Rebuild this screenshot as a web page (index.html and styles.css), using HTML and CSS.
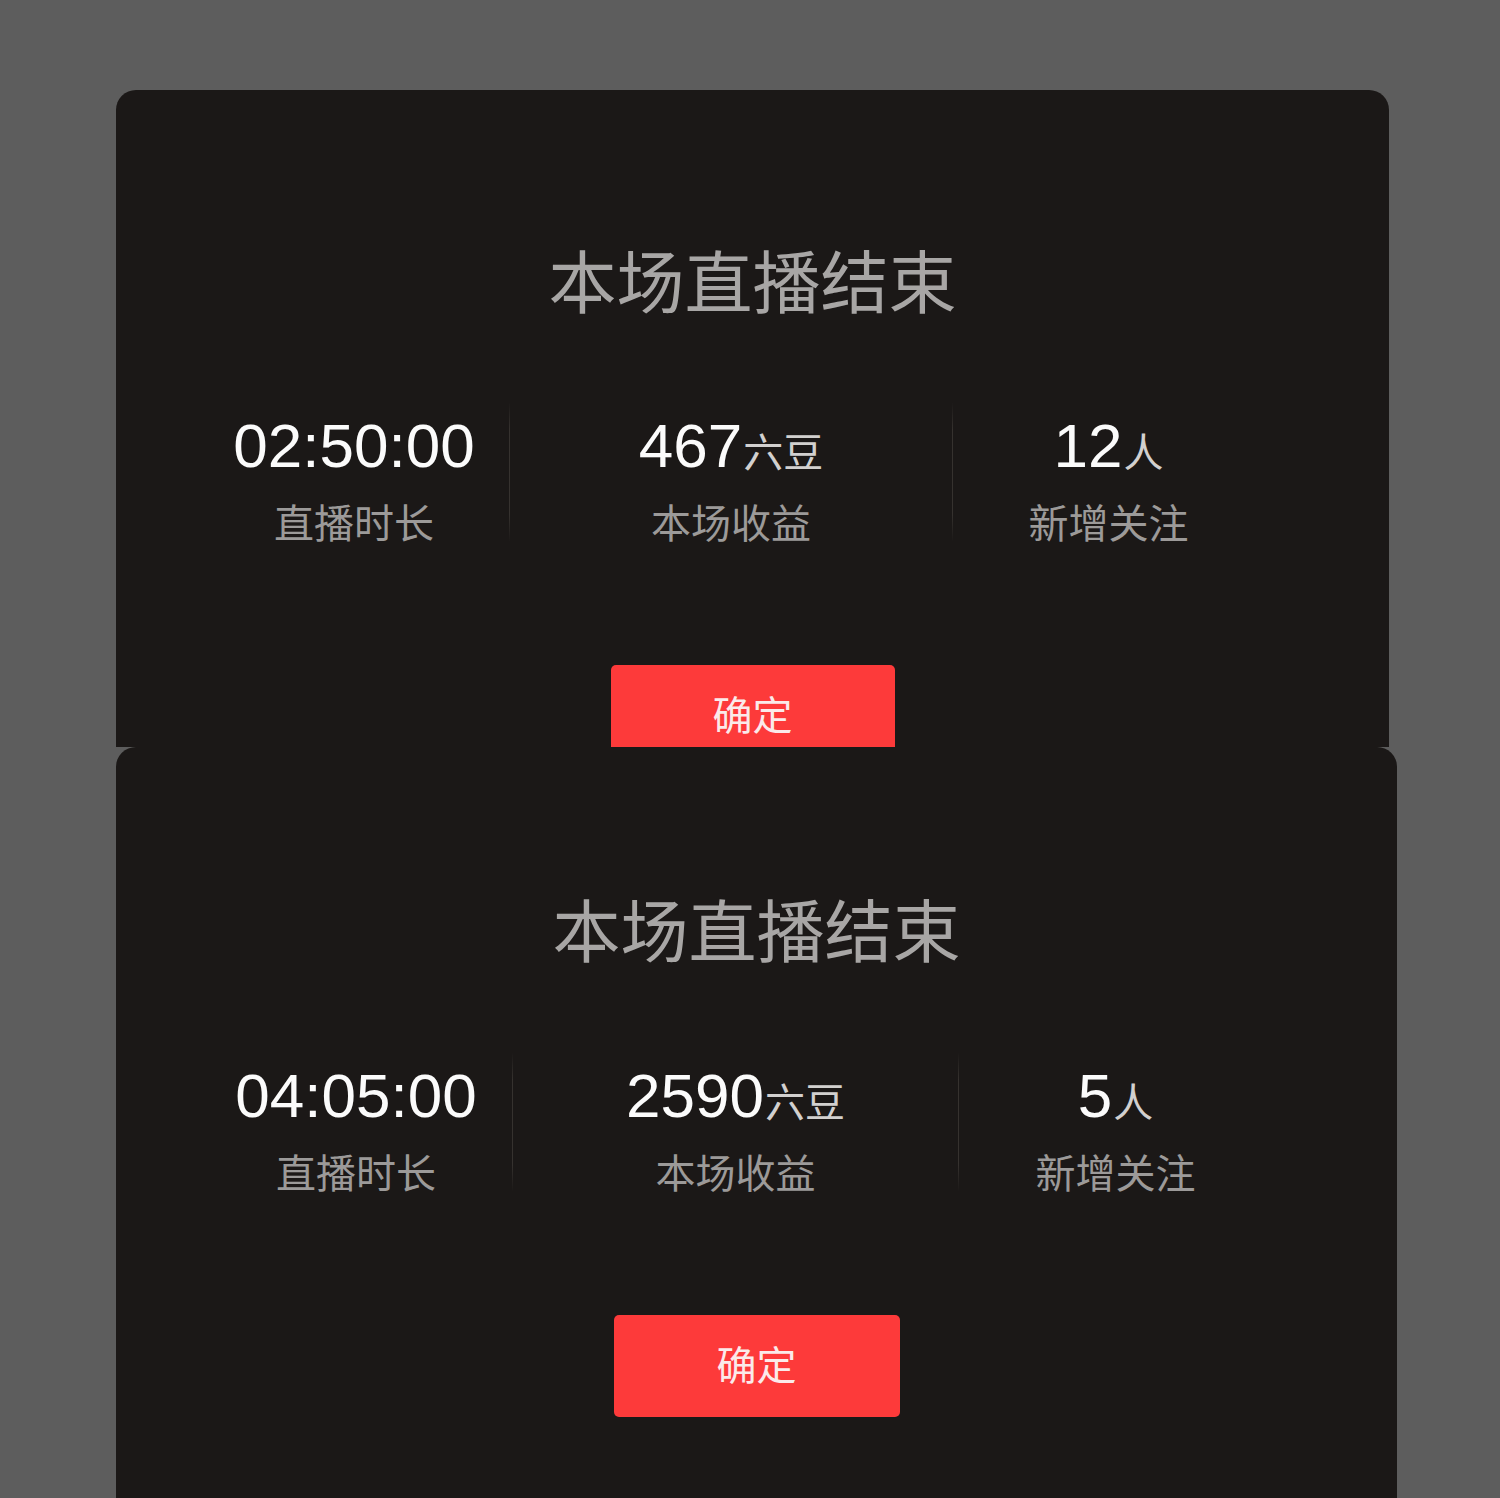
FILE: index.html
```html
<!DOCTYPE html>
<html lang="zh-CN">
<head>
<meta charset="utf-8">
<title>本场直播结束</title>
<link rel="stylesheet" href="styles.css">
</head>
<body>
<div class="page">
  <section class="card card--first">
    <h1 class="title">本场直播结束</h1>
    <div class="stats">
      <div class="stat">
        <div class="value">02:50:00</div>
        <div class="label">直播时长</div>
      </div>
      <div class="stat">
        <div class="value">467<span class="unit">六豆</span></div>
        <div class="label">本场收益</div>
      </div>
      <div class="stat">
        <div class="value">12<span class="unit">人</span></div>
        <div class="label">新增关注</div>
      </div>
    </div>
    <button class="btn">确定</button>
  </section>
  <section class="card card--second">
    <h1 class="title">本场直播结束</h1>
    <div class="stats">
      <div class="stat">
        <div class="value">04:05:00</div>
        <div class="label">直播时长</div>
      </div>
      <div class="stat">
        <div class="value">2590<span class="unit">六豆</span></div>
        <div class="label">本场收益</div>
      </div>
      <div class="stat">
        <div class="value">5<span class="unit">人</span></div>
        <div class="label">新增关注</div>
      </div>
    </div>
    <button class="btn">确定</button>
  </section>
</div>
</body>
</html>
```
FILE: styles.css
```css
html, body {
  margin: 0;
  padding: 0;
  background: #5d5d5d;
}
body {
  font-family: "Noto Sans CJK SC", "Noto Sans", sans-serif;
  height: 1498px;
  overflow: hidden;
}
.page {
  padding-top: 90px;
  padding-left: 116px;
}
.card {
  box-sizing: border-box;
  background: #1b1817;
  border-radius: 20px 20px 0 0;
  overflow: hidden;
}
.card--first {
  width: 1273px;
  height: 657px;
  padding-top: 155px;
}
.card--second {
  width: 1281px;
  height: 900px;
  padding-top: 147px;
}
.title {
  margin: 0;
  font-size: 68px;
  line-height: 68px;
  font-weight: 400;
  color: #a8a6a5;
  text-align: center;
}
.stats {
  display: grid;
  grid-template-columns: 310px 443px 312px;
  margin: 90px 0 0 83px;
}
.card--second .stats {
  grid-template-columns: 312px 446px 314px;
  margin: 91px 0 0 84px;
}
.stat {
  box-sizing: border-box;
  height: 138px;
  padding-top: 7px;
  text-align: center;
}
.stat + .stat {
  border-left: 1px solid #34302f;
  border-image: linear-gradient(to bottom, rgba(52,48,47,0) 0%, #36322f 20%, #36322f 80%, rgba(52,48,47,0) 100%) 1;
}
.value {
  font-family: "Liberation Sans", Arial, sans-serif;
  font-size: 62px;
  line-height: 72px;
  color: #fbfbfb;
  white-space: nowrap;
}
.unit {
  font-family: "Noto Sans CJK SC", sans-serif;
  font-size: 40px;
  line-height: 40px;
  color: #d2d0cf;
  margin-left: 1px;
}
.label {
  margin-top: 19px;
  font-size: 40px;
  line-height: 40px;
  color: #9c9a99;
}
.btn {
  display: block;
  box-sizing: border-box;
  width: 284px;
  height: 102px;
  margin: 124px auto 0;
  padding: 0 0 6px;
  border: 0;
  border-radius: 5px;
  background: #fd3a3a;
  color: #fbeaea;
  font-family: "Noto Sans CJK SC", sans-serif;
  font-size: 40px;
  line-height: 96px;
  text-align: center;
}
.card--second .btn {
  width: 286px;
  margin-top: 124px;
}
```
